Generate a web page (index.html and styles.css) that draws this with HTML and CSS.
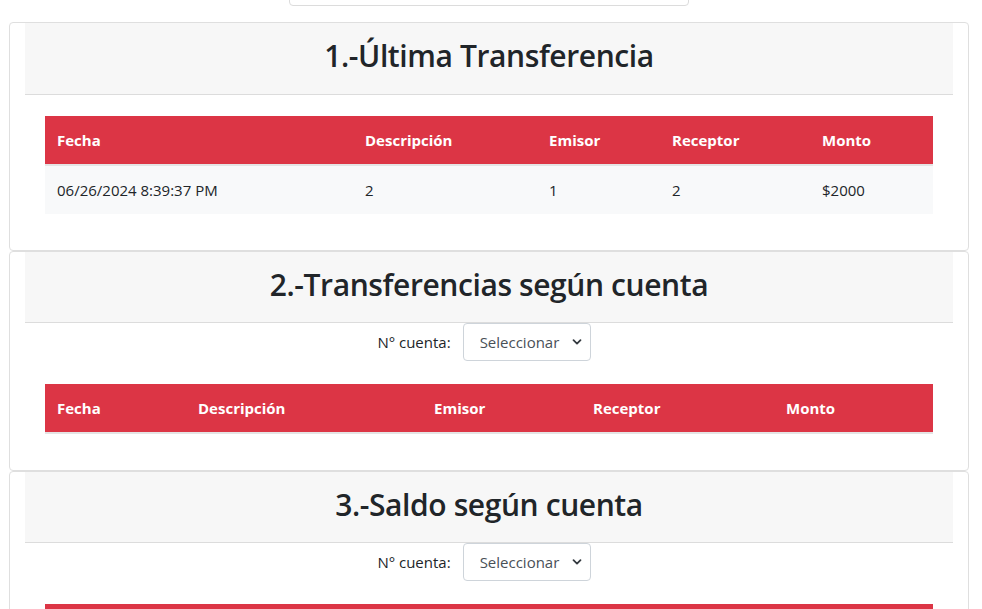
FILE: index.html
```html
<!DOCTYPE html>
<html lang="es">
<head>
<meta charset="utf-8">
<title>Transferencias</title>
<link rel="stylesheet" href="styles.css">
</head>
<body>
<div class="page">
  <div class="top-box"></div>

  <section class="card">
    <div class="card-header"><h2>1.-Última Transferencia</h2></div>
    <div class="card-body">
      <table class="tbl t1">
        <colgroup><col class="c1"><col class="c2"><col class="c3"><col class="c4"><col class="c5"></colgroup>
        <thead>
          <tr><th>Fecha</th><th>Descripción</th><th>Emisor</th><th>Receptor</th><th>Monto</th></tr>
        </thead>
        <tbody>
          <tr><td>06/26/2024 8:39:37 PM</td><td>2</td><td>1</td><td>2</td><td>$2000</td></tr>
        </tbody>
      </table>
    </div>
  </section>

  <section class="card">
    <div class="card-header header-short"><h2>2.-Transferencias según cuenta</h2></div>
    <div class="filter">
      <label class="filter-label" for="cta2">N° cuenta:</label>
      <div class="select-wrap">
        <select id="cta2" class="select"><option>Seleccionar</option></select>
        <svg class="chev" width="10" height="8" viewBox="0 0 10 8"><path d="M1.5 2.2 L5 5.6 L8.5 2.2" fill="none" stroke="#343a40" stroke-width="1.8" stroke-linecap="round" stroke-linejoin="round"/></svg>
      </div>
    </div>
    <div class="card-body body-after-filter">
      <table class="tbl t2">
        <colgroup><col class="c1"><col class="c2"><col class="c3"><col class="c4"><col class="c5"></colgroup>
        <thead>
          <tr><th>Fecha</th><th>Descripción</th><th>Emisor</th><th>Receptor</th><th>Monto</th></tr>
        </thead>
        <tbody></tbody>
      </table>
    </div>
  </section>

  <section class="card">
    <div class="card-header header-short"><h2>3.-Saldo según cuenta</h2></div>
    <div class="filter">
      <label class="filter-label" for="cta3">N° cuenta:</label>
      <div class="select-wrap">
        <select id="cta3" class="select"><option>Seleccionar</option></select>
        <svg class="chev" width="10" height="8" viewBox="0 0 10 8"><path d="M1.5 2.2 L5 5.6 L8.5 2.2" fill="none" stroke="#343a40" stroke-width="1.8" stroke-linecap="round" stroke-linejoin="round"/></svg>
      </div>
    </div>
    <div class="card-body body-after-filter">
      <table class="tbl t2">
        <colgroup><col class="c1"><col class="c2"><col class="c3"><col class="c4"><col class="c5"></colgroup>
        <thead>
          <tr><th></th><th></th><th></th><th></th><th></th></tr>
        </thead>
        <tbody></tbody>
      </table>
    </div>
  </section>
</div>
</body>
</html>
```

FILE: styles.css
```css
* { box-sizing: border-box; }

html, body {
  margin: 0;
  padding: 0;
  background: #fff;
  color: #212529;
  font-family: "Open Sans", "Noto Sans", "Liberation Sans", sans-serif;
  font-size: 15px;
  line-height: 24px;
  overflow: hidden;
}

.page {
  padding: 0 13px 0 9px;
}

.top-box {
  width: 400px;
  height: 38px;
  margin: -32px auto 16px;
  border: 1px solid #dcdcdc;
  border-radius: 4px;
  background: #fff;
}

.card {
  border: 1px solid #dfdfdf;
  border-radius: 4px;
  padding: 0 15px;
  background: #fff;
}

.card-header {
  height: 72px;
  padding-bottom: 6px;
  background: #f7f7f7;
  border-bottom: 1px solid #dcdcdc;
  display: flex;
  align-items: center;
  justify-content: center;
}

.card-header.header-short {
  height: 71px;
  padding-bottom: 5px;
}

.card-header h2 {
  margin: 0;
  font-size: 30px;
  font-weight: 600;
  line-height: 36px;
  color: #212529;
  letter-spacing: -0.4px;
}

.card-body {
  padding: 21px 20px 36px;
}

.body-after-filter {
  padding-top: 23px;
}

.filter {
  display: flex;
  justify-content: center;
  align-items: center;
  gap: 12px;
  padding-right: 10px;
}

.filter-label {
  font-size: 15px;
}

.select-wrap {
  position: relative;
  width: 128px;
  height: 38px;
}

.select {
  appearance: none;
  -webkit-appearance: none;
  width: 100%;
  height: 100%;
  border: 1px solid #ced4da;
  border-radius: 4px;
  background: #fff;
  color: #495057;
  font-family: inherit;
  font-size: 15px;
  padding: 0 12px 0 16px;
}

.chev {
  position: absolute;
  right: 9px;
  top: 15px;
  pointer-events: none;
}

.tbl {
  width: 100%;
  border-collapse: collapse;
  table-layout: fixed;
}

.tbl th,
.tbl td {
  text-align: left;
  padding: 12px;
  height: 48px;
  white-space: nowrap;
}

.tbl th {
  background: #dc3545;
  color: #fff;
  font-weight: 700;
  font-size: 15px;
  border-bottom: 2px solid #e4e4e4;
}

.tbl tbody tr:nth-child(odd) td {
  background: #f8f9fa;
}

.t1 .c1 { width: 308px; }
.t1 .c2 { width: 184px; }
.t1 .c3 { width: 123px; }
.t1 .c4 { width: 150px; }
.t1 .c5 { width: 123px; }

.t2 .c1 { width: 141px; }
.t2 .c2 { width: 236px; }
.t2 .c3 { width: 159px; }
.t2 .c4 { width: 193px; }
.t2 .c5 { width: 159px; }
```
